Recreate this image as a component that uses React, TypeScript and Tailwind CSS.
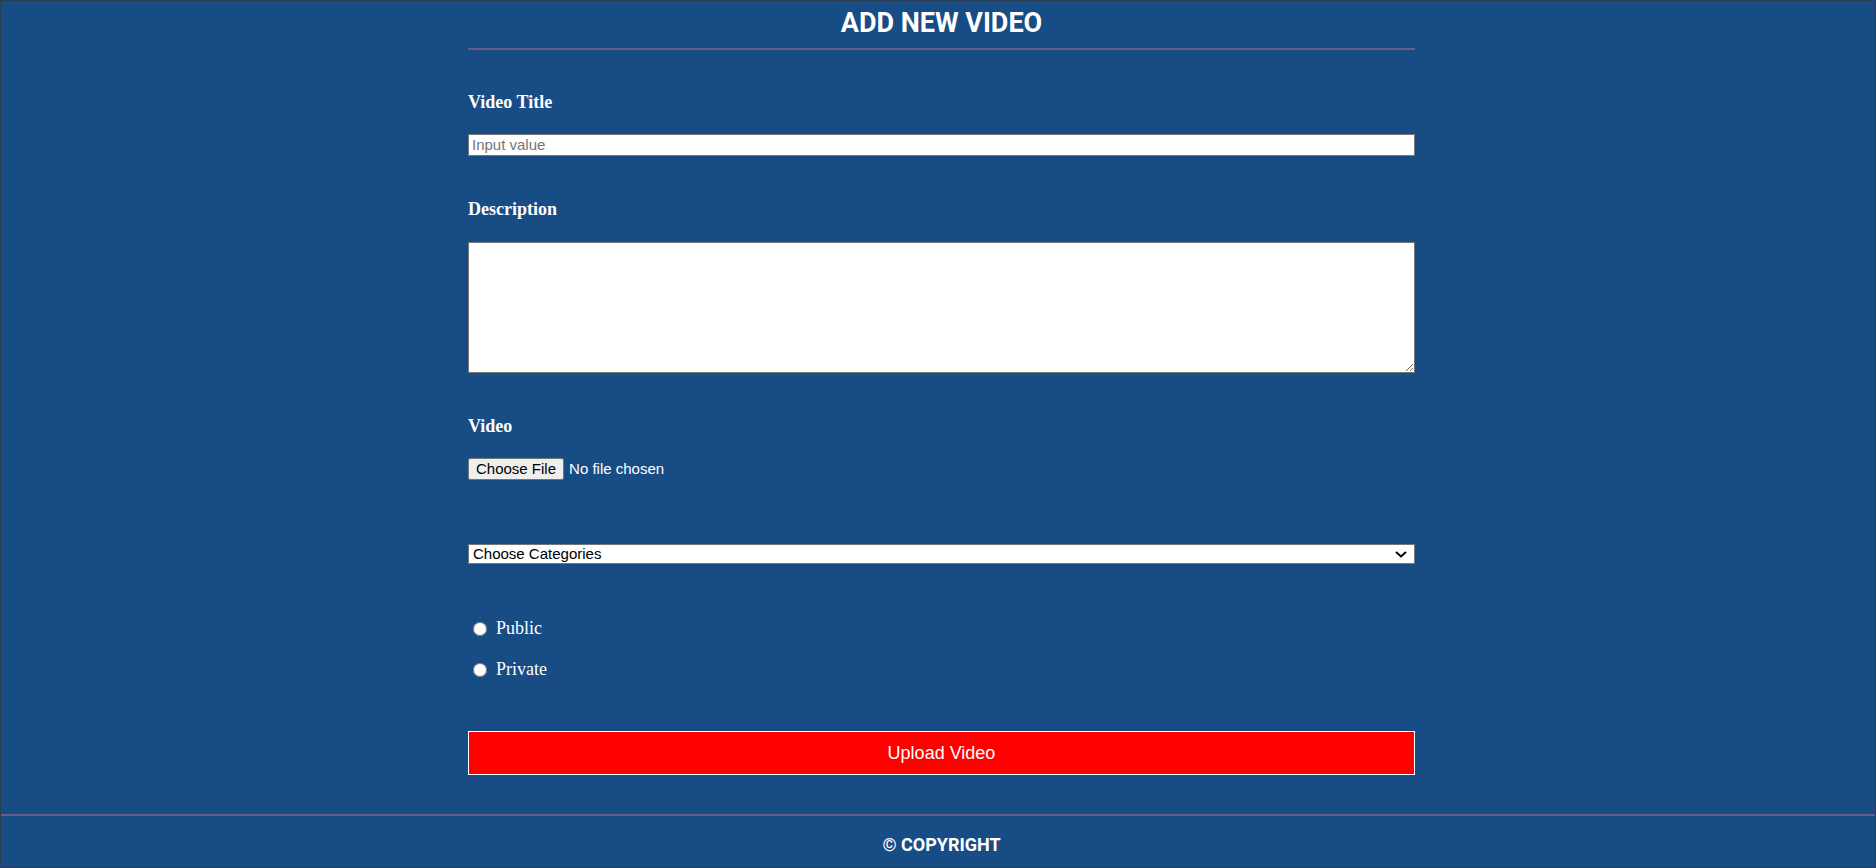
import React from "react";

export default function App() {
  return (
    <div className="min-h-[868px] bg-[#184c84] border border-[#2d3d52] font-['Liberation_Serif',serif] text-white">
      <div className="ml-[467px] w-[947px]">
        <h2 className="pt-[7px] text-center font-['Roboto',sans-serif] font-bold text-[27px] leading-[31px] text-white">
          ADD NEW VIDEO
        </h2>
        <div className="mt-[9px] h-[2px] bg-[#675d84]" />

        <form onSubmit={(e) => e.preventDefault()}>
          <label htmlFor="title" className="mt-[42px] block text-[18px] leading-[21px] font-bold">
            Video Title
          </label>
          <input
            id="title"
            type="text"
            placeholder="Input value"
            className="mt-[21px] block h-[22px] w-full border border-[#767676] bg-white px-[3px] font-['Liberation_Sans',sans-serif] text-[15px] text-black placeholder:text-[#757575] outline-none"
          />

          <label htmlFor="desc" className="mt-[43px] block text-[18px] leading-[21px] font-bold">
            Description
          </label>
          <textarea
            id="desc"
            className="mt-[22px] block h-[131px] w-full border border-[#767676] bg-white p-[2px] font-['Liberation_Mono',monospace] text-[13px] text-black outline-none"
          />

          <label className="mt-[43px] block text-[18px] leading-[21px] font-bold">Video</label>
          <div className="mt-[21px] flex h-[22px] items-center font-['Liberation_Sans',sans-serif] text-[15px]">
            <label className="flex h-[22px] items-center rounded-[2px] border border-[#767676] bg-[#efefef] px-[7px] text-black">
              Choose File
              <input type="file" className="hidden" />
            </label>
            <span className="ml-[5px] text-white">No file chosen</span>
          </div>

          <div className="relative mt-[64px] h-[20px]">
            <select
              defaultValue=""
              className="block h-[20px] w-full appearance-none border border-[#767676] bg-white pl-[4px] font-['Liberation_Sans',sans-serif] text-[15px] leading-[18px] text-black outline-none"
            >
              <option value="">Choose Categories</option>
              <option value="music">Music</option>
              <option value="sports">Sports</option>
              <option value="education">Education</option>
            </select>
            <svg
              className="pointer-events-none absolute right-[8px] top-[7px]"
              width="12"
              height="7"
              viewBox="0 0 12 7"
              fill="none"
            >
              <path d="M1 1l5 4.5L11 1" stroke="#000" strokeWidth="2" />
            </svg>
          </div>

          <label className="mt-[54px] flex h-[21px] items-center text-[18px] leading-[21px]">
            <input type="radio" name="privacy" className="m-0 ml-[5px] h-[14px] w-[14px]" />
            <span className="ml-[9px]">Public</span>
          </label>
          <label className="mt-[20px] flex h-[21px] items-center text-[18px] leading-[21px]">
            <input type="radio" name="privacy" className="m-0 ml-[5px] h-[14px] w-[14px]" />
            <span className="ml-[9px]">Private</span>
          </label>

          <button
            type="submit"
            className="mt-[51px] block h-[44px] w-full border border-white bg-[#ff0000] font-['Liberation_Sans',sans-serif] text-[18px] text-white"
          >
            Upload Video
          </button>
        </form>
      </div>

      <div className="mt-[39px] h-[2px] bg-[#675d84]" />
      <div className="ml-[467px] w-[947px] pt-[18px] pb-[12px] text-center font-['Roboto',sans-serif] font-bold text-[18px] leading-[21px]">
        © COPYRIGHT
      </div>
    </div>
  );
}
